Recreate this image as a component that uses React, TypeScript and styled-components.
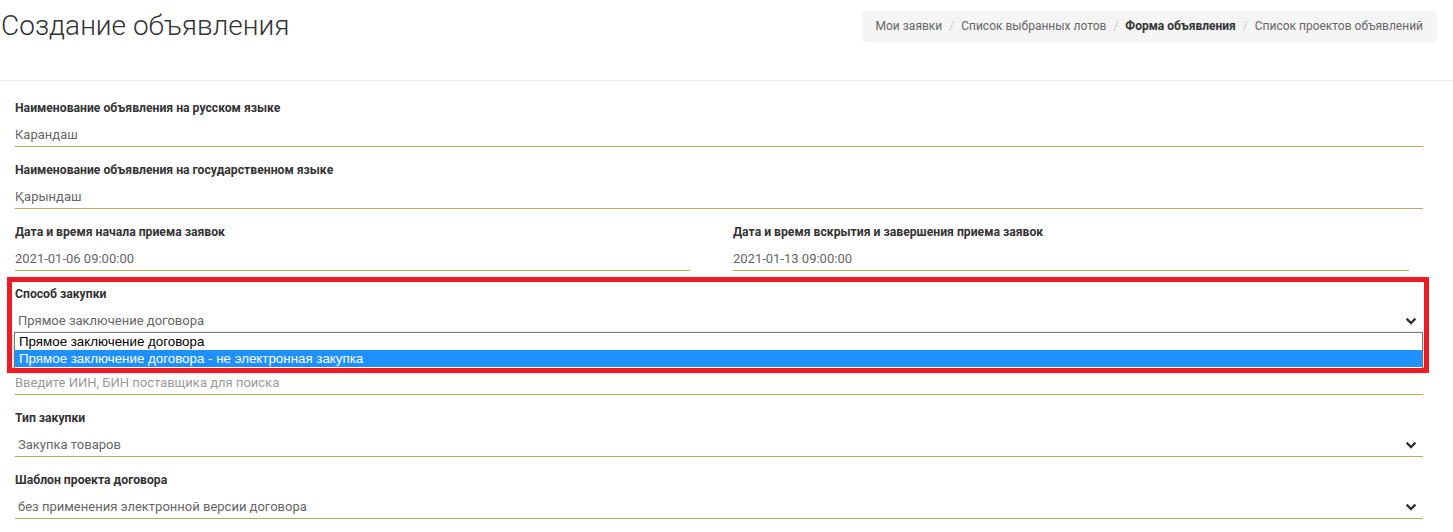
import React from "react";
import styled, { createGlobalStyle } from "styled-components";

const Global = createGlobalStyle`
  * { box-sizing: border-box; }
  html, body { margin: 0; padding: 0; background: #fff; }
  body { font-family: Roboto, "Noto Sans", "Liberation Sans", sans-serif; color: #333; }
`;

const Page = styled.div`
  width: 1453px;
`;

const Header = styled.header`
  display: flex;
  justify-content: space-between;
  align-items: flex-start;
  height: 81px;
  padding: 0 16px 0 1px;
  border-bottom: 1px solid #eeeeee;
`;

const Title = styled.h1`
  margin: 8px 0 0;
  font-size: 28px;
  line-height: 36px;
  font-weight: 300;
  color: #333;
`;

const Crumbs = styled.ol`
  display: flex;
  margin: 10px 0 0;
  padding: 8px 14px 8px 14px;
  list-style: none;
  background: #f5f5f5;
  border-radius: 4px;
  font-size: 12px;
  line-height: 16px;
`;

const Crumb = styled.li<{ $active?: boolean }>`
  color: ${(p) => (p.$active ? "#333" : "#666")};
  font-weight: ${(p) => (p.$active ? 700 : 400)};
  &:not(:first-child)::before {
    content: "/";
    padding: 0 7px;
    color: #ccc;
    font-weight: 400;
  }
`;

const Form = styled.form`
  padding: 18px 30px 0 15px;
`;

const Row = styled.div`
  display: grid;
  grid-template-columns: 675px 676px;
  column-gap: 43px;
`;

const FieldBox = styled.div`
  position: relative;
  margin-bottom: 14px;
`;

const Label = styled.label`
  display: block;
  height: 18px;
  margin-bottom: 7px;
  font-size: 12.2px;
  line-height: 18px;
  font-weight: 700;
  color: #333;
`;

const Control = styled.div<{ $select?: boolean; $placeholder?: boolean }>`
  position: relative;
  display: flex;
  align-items: center;
  justify-content: space-between;
  height: 23px;
  padding: 0 6px 0 ${(p) => (p.$select ? "3px" : "0")};
  border-bottom: 1px solid #bfa768;
  font-size: 13px;
  line-height: 22px;
  color: ${(p) => (p.$placeholder ? "#9a9a9a" : "#666")};
`;

const Chevron = styled.svg`
  width: 12px;
  height: 8px;
  flex: none;
`;

const Annotation = styled.div`
  position: absolute;
  top: -8px;
  left: -8px;
  right: -6px;
  bottom: -40px;
  border: 5px solid #ed1c24;
  pointer-events: none;
  z-index: 3;
`;

const Dropdown = styled.ul`
  position: absolute;
  top: 22px;
  left: -1px;
  width: 1409px;
  margin: 0;
  padding: 0 0 1px;
  list-style: none;
  background: #fff;
  border: 1px solid #767676;
  box-shadow: 0 2px 6px rgba(0, 0, 0, 0.25);
  font-family: "Liberation Sans", Arial, sans-serif;
  font-size: 13.33px;
  z-index: 2;
`;

const Option = styled.li<{ $selected?: boolean }>`
  height: 17px;
  padding-left: 4px;
  line-height: 17px;
  color: ${(p) => (p.$selected ? "#fff" : "#000")};
  background: ${(p) => (p.$selected ? "#1e90ff" : "transparent")};
`;

const ChevronIcon = () => (
  <Chevron viewBox="0 0 12 8">
    <path d="M1.6 1.6 L6 6 L10.4 1.6" fill="none" stroke="#333" strokeWidth="2.4" />
  </Chevron>
);

type FieldProps = {
  label?: string;
  value: string;
  select?: boolean;
  placeholder?: boolean;
};

const Field = ({ label, value, select, placeholder }: FieldProps) => (
  <FieldBox>
    <Label>{label}</Label>
    <Control $select={select} $placeholder={placeholder}>
      <span>{value}</span>
      {select && <ChevronIcon />}
    </Control>
  </FieldBox>
);

export default function App() {
  return (
    <Page>
      <Global />
      <Header>
        <Title>Создание объявления</Title>
        <Crumbs>
          <Crumb>Мои заявки</Crumb>
          <Crumb>Список выбранных лотов</Crumb>
          <Crumb $active>Форма объявления</Crumb>
          <Crumb>Список проектов объявлений</Crumb>
        </Crumbs>
      </Header>
      <Form>
        <Field label="Наименование объявления на русском языке" value="Карандаш" />
        <Field label="Наименование объявления на государственном языке" value="Қарындаш" />
        <Row>
          <Field label="Дата и время начала приема заявок" value="2021-01-06 09:00:00" />
          <Field label="Дата и время вскрытия и завершения приема заявок" value="2021-01-13 09:00:00" />
        </Row>
        <FieldBox>
          <Label>Способ закупки</Label>
          <Control $select>
            <span>Прямое заключение договора</span>
            <ChevronIcon />
            <Dropdown>
              <Option>Прямое заключение договора</Option>
              <Option $selected>Прямое заключение договора - не электронная закупка</Option>
            </Dropdown>
          </Control>
          <Annotation />
        </FieldBox>
        <Field value="Введите ИИН, БИН поставщика для поиска" placeholder />
        <Field label="Тип закупки" value="Закупка товаров" select />
        <Field label="Шаблон проекта договора" value="без применения электронной версии договора" select />
      </Form>
    </Page>
  );
}
